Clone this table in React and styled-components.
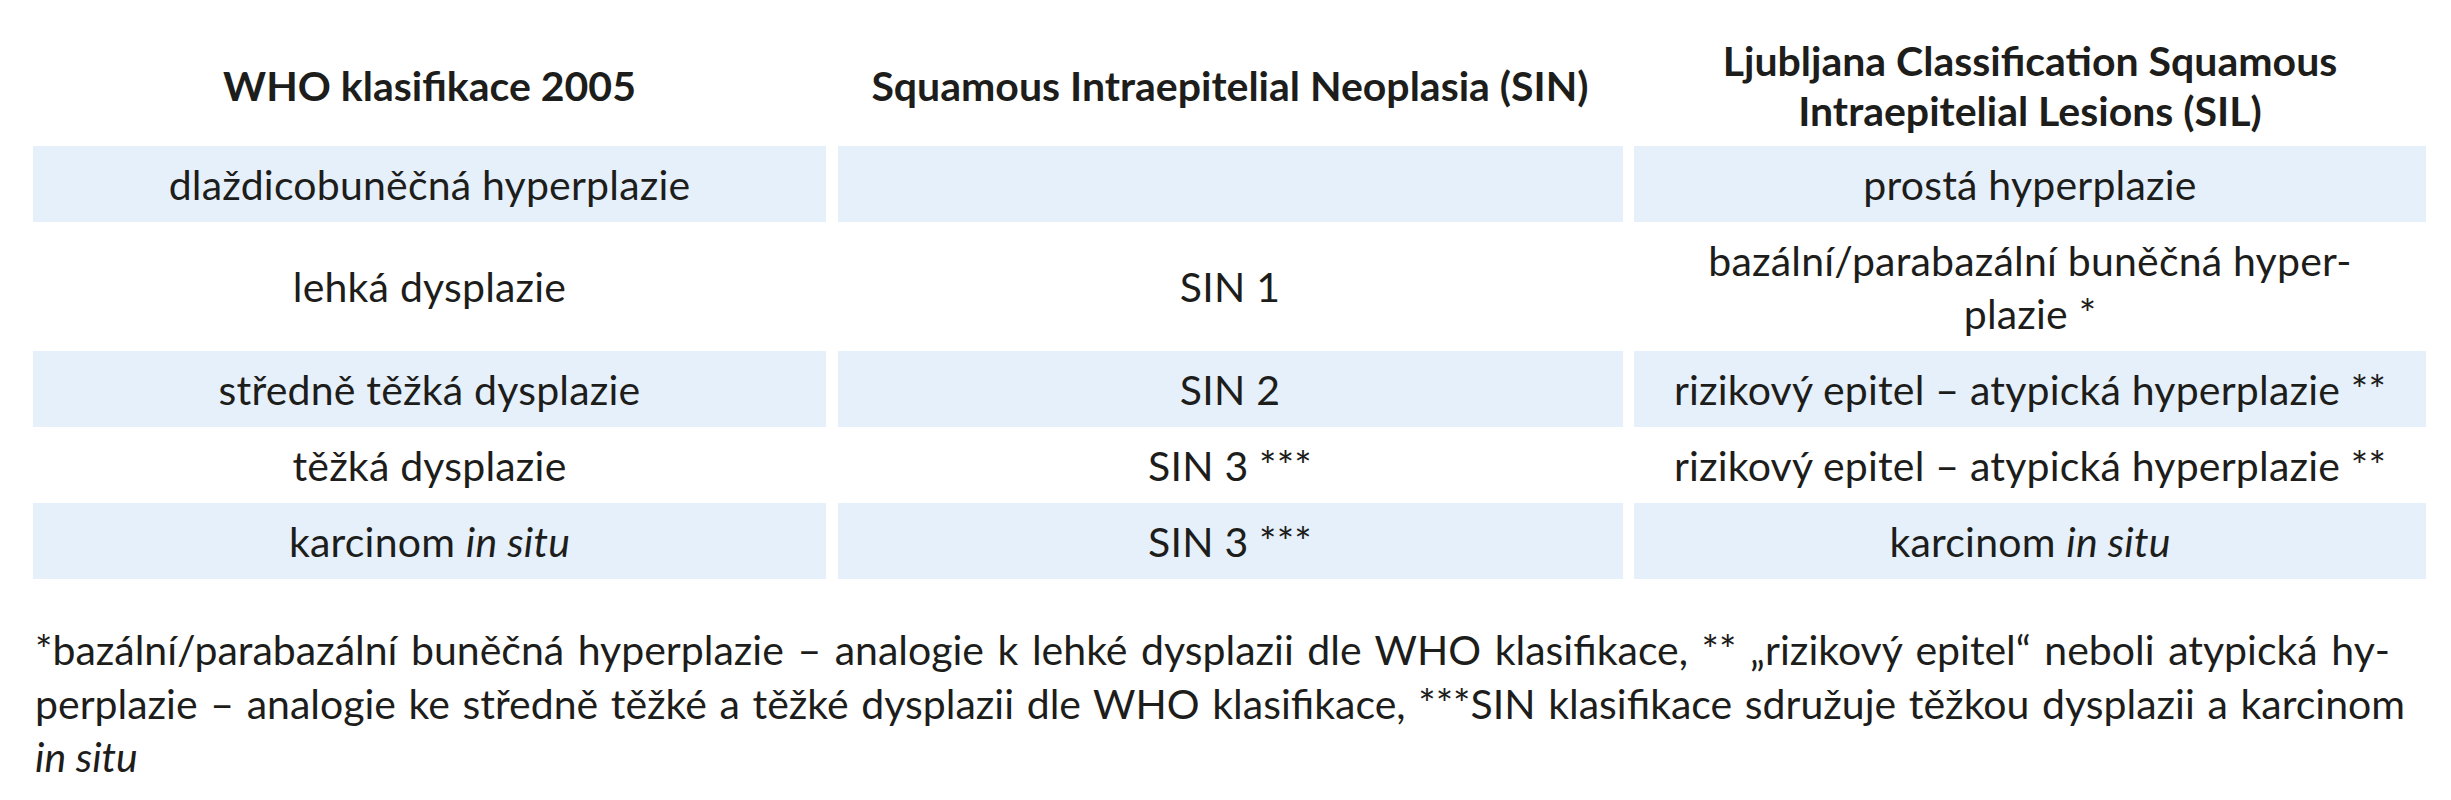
import React from "react";
import styled, { createGlobalStyle } from "styled-components";

const GlobalStyle = createGlobalStyle`
  body {
    margin: 0;
    background: #ffffff;
    font-family: Lato, "Open Sans", "DejaVu Sans", sans-serif;
    color: #1d1d1b;
  }
`;

const Page = styled.div`
  width: 2451px;
  height: 800px;
  box-sizing: border-box;
  padding: 24px 25px 0 33px;
`;

// three columns, small white gutter between the shaded cells
const Table = styled.div`
  display: grid;
  grid-template-columns: 793px 785px 792px;
  column-gap: 11.5px;
`;

const HeadCell = styled.div`
  display: flex;
  align-items: center;
  justify-content: center;
  text-align: center;
  padding: 12px 8px 10px;
  font-size: 41px;
  font-weight: 700;
  line-height: 50px;
  white-space: nowrap;
`;

const Cell = styled.div`
  display: flex;
  align-items: center;
  justify-content: center;
  text-align: center;
  padding: 11.5px 8px;
  font-size: 41px;
  letter-spacing: 0.2px;
  line-height: 53px;
  white-space: nowrap;
  background: ${(props) => (props.$shaded ? "#e6f0fa" : "transparent")};
`;

const Notes = styled.div`
  margin-top: 44px;
  padding-left: 2px;
  width: 2370px;
  font-size: 41px;
  line-height: 53.5px;
`;

const NoteLine = styled.div`
  text-align: ${(props) => (props.$justify ? "justify" : "left")};
  text-align-last: ${(props) => (props.$justify ? "justify" : "left")};
  padding-right: ${(props) => props.$inset || 0}px;
  white-space: nowrap;
`;

const rows = [
  {
    shaded: true,
    cells: ["dlaždicobuněčná hyperplazie", "", "prostá hyperplazie"],
  },
  {
    shaded: false,
    cells: [
      "lehká dysplazie",
      "SIN 1",
      <>
        bazální/parabazální buněčná hyper-
        <br />
        plazie *
      </>,
    ],
  },
  {
    shaded: true,
    cells: [
      "středně těžká dysplazie",
      "SIN 2",
      "rizikový epitel – atypická hyperplazie **",
    ],
  },
  {
    shaded: false,
    cells: [
      "těžká dysplazie",
      "SIN 3 ***",
      "rizikový epitel – atypická hyperplazie **",
    ],
  },
  {
    shaded: true,
    cells: [
      <>
        karcinom <i>in situ</i>
      </>,
      "SIN 3 ***",
      <>
        karcinom <i>in situ</i>
      </>,
    ],
  },
];

function App() {
  return (
    <React.Fragment>
      <GlobalStyle />
      <Page>
        <Table>
          <HeadCell>
            <span>WHO klasifikace 2005</span>
          </HeadCell>
          <HeadCell>
            <span>Squamous Intraepitelial Neoplasia (SIN)</span>
          </HeadCell>
          <HeadCell>
            <span>
              Ljubljana Classification Squamous
              <br />
              Intraepitelial Lesions (SIL)
            </span>
          </HeadCell>
          {rows.map((row, i) =>
            row.cells.map((content, j) => (
              <Cell key={i + "-" + j} $shaded={row.shaded}>
                <span>{content}</span>
              </Cell>
            ))
          )}
        </Table>
        <Notes>
          <NoteLine $justify $inset={15}>
            *bazální/parabazální buněčná hyperplazie – analogie k lehké
            dysplazii dle WHO klasifikace, ** „rizikový epitel“ neboli atypická
            hy-
          </NoteLine>
          <NoteLine $justify>
            perplazie – analogie ke středně těžké a těžké dysplazii dle WHO
            klasifikace, ***SIN klasifikace sdružuje těžkou dysplazii a karcinom
          </NoteLine>
          <NoteLine>
            <i>in situ</i>
          </NoteLine>
        </Notes>
      </Page>
    </React.Fragment>
  );
}

export default App;
